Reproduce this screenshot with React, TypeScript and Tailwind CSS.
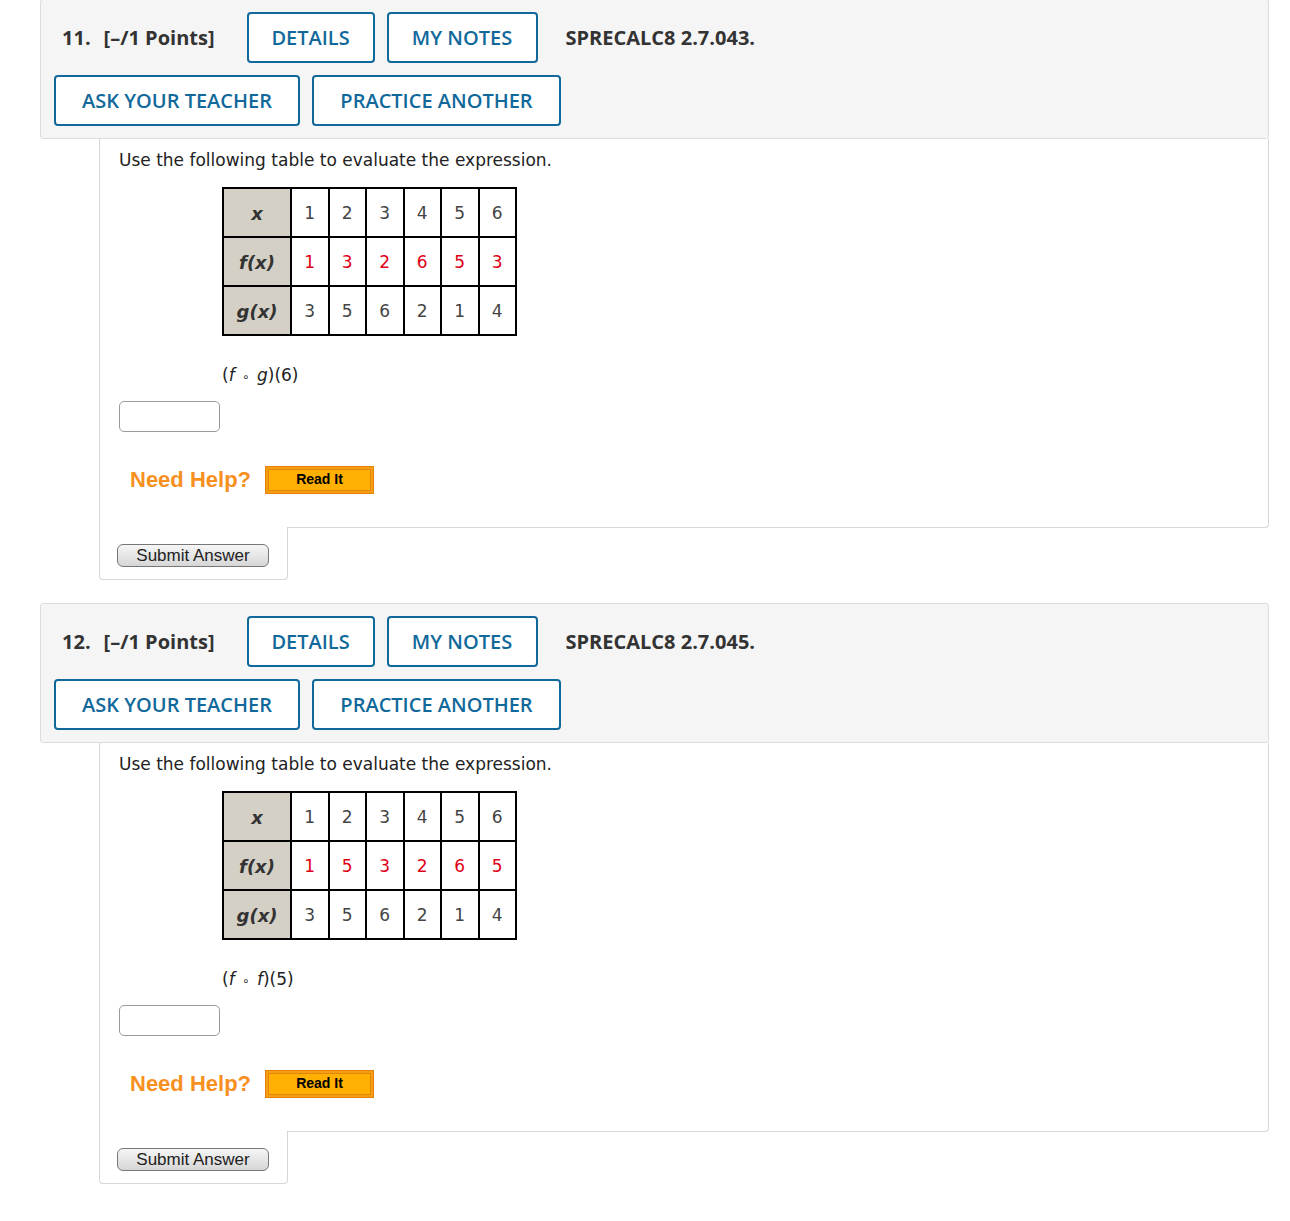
import React from 'react';

type Question = {
  num: number;
  code: string;
  fx: number[];
  gx: number[];
  expr: [string, string, string];
};

const QUESTIONS: Question[] = [
  { num: 11, code: 'SPRECALC8 2.7.043.', fx: [1, 3, 2, 6, 5, 3], gx: [3, 5, 6, 2, 1, 4], expr: ['f', 'g', '6'] },
  { num: 12, code: 'SPRECALC8 2.7.045.', fx: [1, 5, 3, 2, 6, 5], gx: [3, 5, 6, 2, 1, 4], expr: ['f', 'f', '5'] },
];

const openSans = { fontFamily: '"Open Sans", "Liberation Sans", sans-serif' };
const verdana = { fontFamily: '"DejaVu Sans", Verdana, sans-serif' };
const arial = { fontFamily: '"Liberation Sans", Arial, sans-serif' };

function OutlineButton({ label, className = '' }: { label: string; className?: string }) {
  return (
    <button
      className={`h-[51px] rounded-[4px] border-2 border-[#11699b] bg-white text-[20px] font-semibold text-[#11699b] ${className}`}
      style={openSans}
    >
      {label}
    </button>
  );
}

function ValueTable({ fx, gx }: { fx: number[]; gx: number[] }) {
  const head = 'w-[68px] h-[49px] pt-[3px] border-2 border-black bg-[#d5d0c6] text-center font-bold italic text-[18px] text-[#333]';
  const cell = 'w-[37.5px] h-[49px] pt-[4px] border-2 border-black bg-white text-center text-[17px]';
  return (
    <table className="border-collapse" style={verdana}>
      <tbody>
        <tr>
          <td className={head}>x</td>
          {[1, 2, 3, 4, 5, 6].map((n) => (
            <td key={n} className={`${cell} text-[#444]`}>{n}</td>
          ))}
        </tr>
        <tr>
          <td className={head}>f(x)</td>
          {fx.map((n, i) => (
            <td key={i} className={`${cell} text-[#e00016]`}>{n}</td>
          ))}
        </tr>
        <tr>
          <td className={head}>g(x)</td>
          {gx.map((n, i) => (
            <td key={i} className={`${cell} text-[#444]`}>{n}</td>
          ))}
        </tr>
      </tbody>
    </table>
  );
}

function QuestionBlock({ q }: { q: Question }) {
  return (
    <div className="flex flex-col">
      <div className="ml-[40px] w-[1229px] rounded-[3px] border border-[#dcdcdc] bg-[#f5f5f5] px-[13px] pt-[12px] pb-[12px]">
        <div className="flex items-center">
          <span className="ml-[8px] text-[20px] font-bold text-[#333]" style={openSans}>{q.num}.</span>
          <span className="ml-[13px] text-[20px] font-bold text-[#333]" style={openSans}>[–/1 Points]</span>
          <OutlineButton label="DETAILS" className="ml-[32px] w-[128px]" />
          <OutlineButton label="MY NOTES" className="ml-[12px] w-[151px]" />
          <span className="ml-[28px] text-[20px] font-bold text-[#333]" style={openSans}>{q.code}</span>
        </div>
        <div className="mt-[12px] flex items-center">
          <OutlineButton label="ASK YOUR TEACHER" className="w-[246px]" />
          <OutlineButton label="PRACTICE ANOTHER" className="ml-[12px] w-[249px]" />
        </div>
      </div>

      <div className="ml-[99px] w-[1170px] rounded-br-[4px] border-x border-b border-[#d6d6d6] bg-white pl-[19px] pt-[9px] pb-[31px]">
        <p className="text-[17px] text-[#222]" style={verdana}>Use the following table to evaluate the expression.</p>
        <div className="mt-[13px] ml-[103px]">
          <ValueTable fx={q.fx} gx={q.gx} />
        </div>
        <p className="mt-[27px] ml-[103px] text-[17px] text-[#222]" style={verdana}>
          (<i>{q.expr[0]}</i> <span className="mx-[2px] text-[12px]">∘</span> <i>{q.expr[1]}</i>)({q.expr[2]})
        </p>
        <input
          className="mt-[13px] block h-[31px] w-[101px] rounded-[5px] border border-[#9a9a9a] bg-white"
          aria-label="answer"
        />
        <div className="mt-[31px] flex items-center">
          <span className="ml-[11px] text-[22px] font-bold text-[#f7901e]" style={arial}>Need Help?</span>
          <button
            className="ml-[14px] flex h-[28px] w-[109px] items-center justify-center border border-[#e47f0c] bg-[#ffb000] text-[14px] font-bold text-black shadow-[inset_0_0_0_2px_#f79d12,inset_0_0_0_3px_#e2860e]"
            style={arial}
          >
            Read It
          </button>
        </div>
      </div>

      <div className="relative -mt-px ml-[99px] w-[189px] rounded-b-[4px] border-x border-b border-[#d6d6d6] bg-white pl-[17px] pt-[17px] pb-[12px]">
        <button
          className="block h-[23px] w-[152px] rounded-[6px] border border-[#777] bg-gradient-to-b from-[#f6f6f6] to-[#d6d6d6] text-[17px] leading-none text-[#222]"
          style={arial}
        >
          Submit Answer
        </button>
      </div>
    </div>
  );
}

export default function App() {
  return (
    <div className="min-h-[1221px] w-[1290px] bg-white">
      <div className="-mt-px flex flex-col gap-[23px]">
        {QUESTIONS.map((q) => (
          <QuestionBlock key={q.num} q={q} />
        ))}
      </div>
    </div>
  );
}
